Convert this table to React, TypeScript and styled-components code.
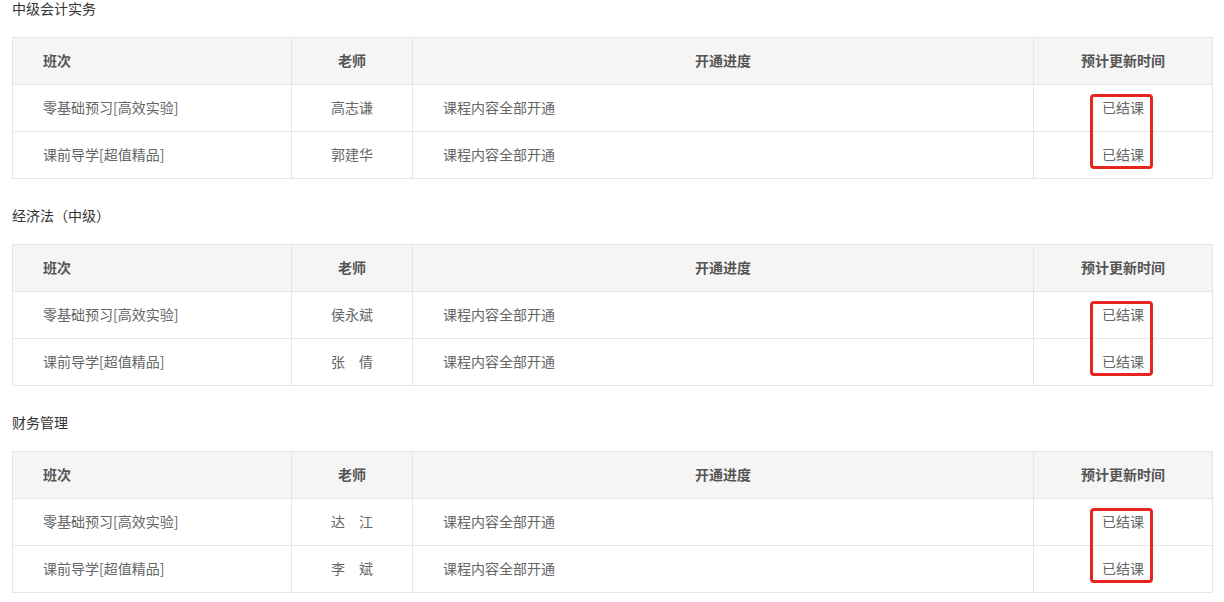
import React from "react";
import styled, { createGlobalStyle } from "styled-components";

const Global = createGlobalStyle`
  html, body { margin: 0; padding: 0; background: #fff; }
  body { font-family: "Microsoft YaHei", "Noto Sans CJK SC", "Noto Sans", sans-serif; }
`;

const Page = styled.div`
  padding: 0 12px;
  display: flex;
  flex-direction: column;
`;

const Section = styled.section`
  display: flex;
  flex-direction: column;
  & + & { margin-top: 28px; }
`;

const Title = styled.h3`
  margin: 0 0 21px 0;
  font-size: 14px;
  font-weight: normal;
  line-height: 16px;
  color: #333;
`;

const TableWrap = styled.div`
  position: relative;
  width: 1200px;
`;

const Table = styled.table`
  width: 1200px;
  table-layout: fixed;
  border-collapse: collapse;
  font-size: 14px;
  color: #666;
`;

const Th = styled.th<{ $align?: string }>`
  height: 47px;
  box-sizing: border-box;
  padding: 0 30px 3px;
  background: #f5f5f5;
  border: 1px solid #e6e6e6;
  font-weight: bold;
  color: #555;
  text-align: ${(p) => p.$align || "center"};
`;

const Td = styled.td<{ $align?: string }>`
  height: 47px;
  box-sizing: border-box;
  padding: 0 30px 3px;
  border: 1px solid #e6e6e6;
  text-align: ${(p) => p.$align || "center"};
  white-space: pre;
`;

const Mark = styled.div`
  position: absolute;
  left: 1078px;
  top: 57px;
  width: 57px;
  height: 69px;
  border: 3px solid #e6261e;
  border-radius: 4px;
  pointer-events: none;
`;

type Row = { name: string; teacher: string };
const data: { title: string; rows: Row[] }[] = [
  {
    title: "中级会计实务",
    rows: [
      { name: "零基础预习[高效实验]", teacher: "高志谦" },
      { name: "课前导学[超值精品]", teacher: "郭建华" },
    ],
  },
  {
    title: "经济法（中级）",
    rows: [
      { name: "零基础预习[高效实验]", teacher: "侯永斌" },
      { name: "课前导学[超值精品]", teacher: "张　倩" },
    ],
  },
  {
    title: "财务管理",
    rows: [
      { name: "零基础预习[高效实验]", teacher: "达　江" },
      { name: "课前导学[超值精品]", teacher: "李　斌" },
    ],
  },
];

export default function App() {
  return (
    <>
      <Global />
      <Page>
        {data.map((s) => (
          <Section key={s.title}>
            <Title>{s.title}</Title>
            <TableWrap>
              <Table>
                <colgroup>
                  <col style={{ width: 279 }} />
                  <col style={{ width: 121 }} />
                  <col style={{ width: 621 }} />
                  <col style={{ width: 179 }} />
                </colgroup>
                <thead>
                  <tr>
                    <Th $align="left">班次</Th>
                    <Th>老师</Th>
                    <Th>开通进度</Th>
                    <Th>预计更新时间</Th>
                  </tr>
                </thead>
                <tbody>
                  {s.rows.map((r) => (
                    <tr key={r.name}>
                      <Td $align="left">{r.name}</Td>
                      <Td>{r.teacher}</Td>
                      <Td $align="left">课程内容全部开通</Td>
                      <Td>已结课</Td>
                    </tr>
                  ))}
                </tbody>
              </Table>
              <Mark />
            </TableWrap>
          </Section>
        ))}
      </Page>
    </>
  );
}
